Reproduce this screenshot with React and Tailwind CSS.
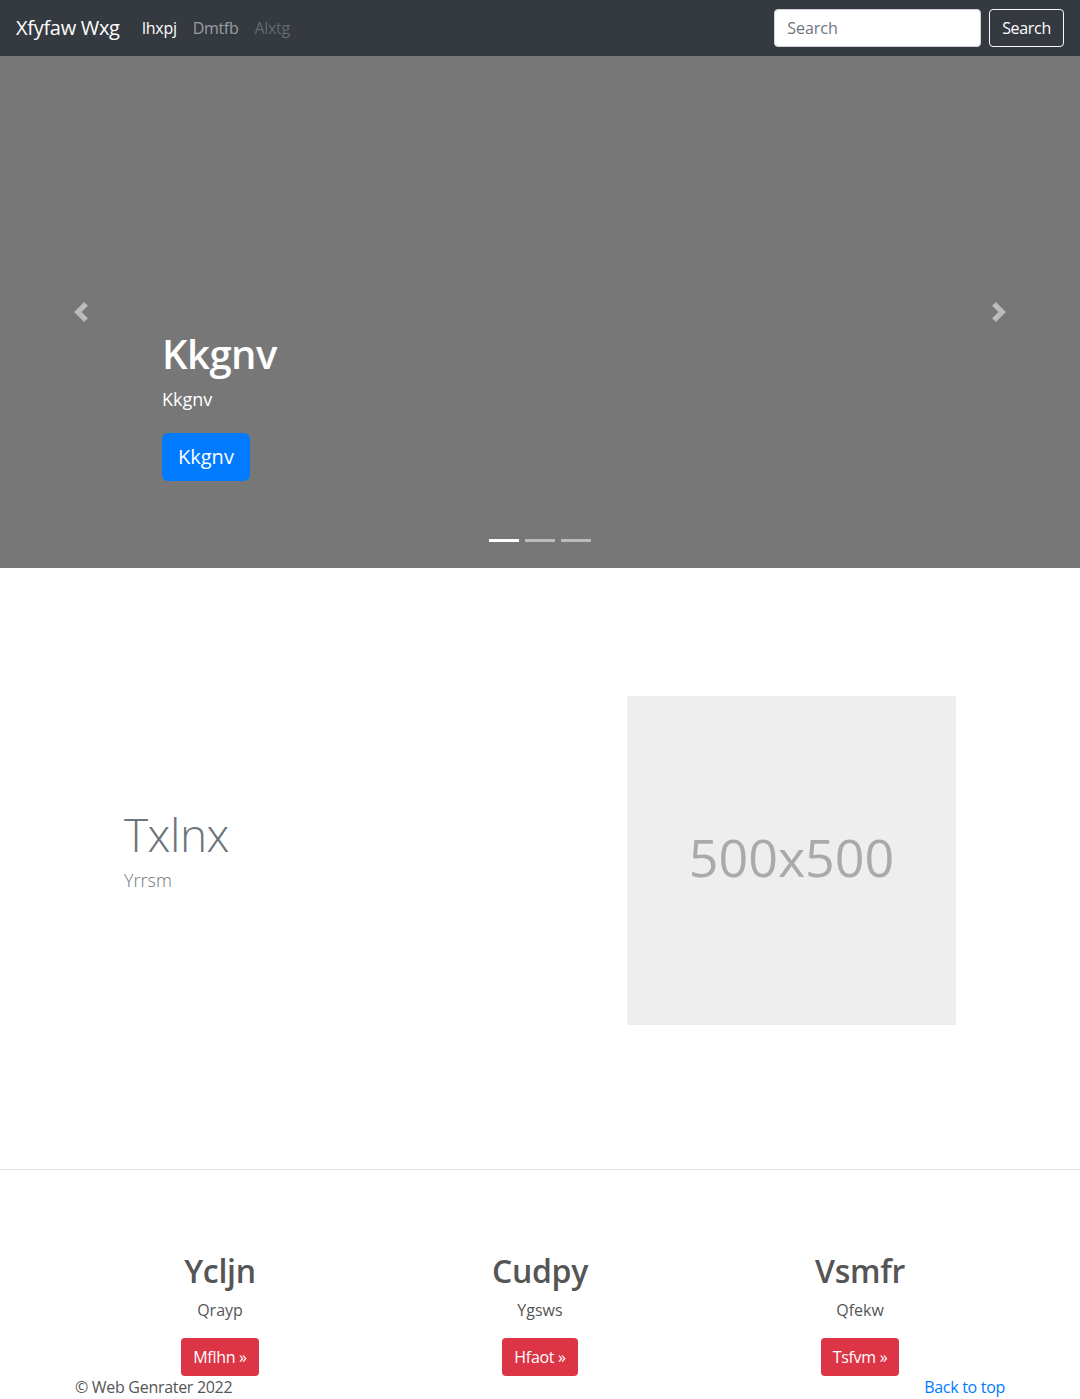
import React from "react";

const FONT = { fontFamily: '"Open Sans", "Noto Sans", "Liberation Sans", sans-serif' };

const CARDS = [
  { title: "Ycljn", text: "Qrayp", btn: "Mflhn" },
  { title: "Cudpy", text: "Ygsws", btn: "Hfaot" },
  { title: "Vsmfr", text: "Qfekw", btn: "Tsfvm" },
];

const Chevron = ({ dir }) => (
  <svg width="20" height="20" viewBox="0 0 8 8" className="opacity-50">
    {dir === "left" ? (
      <path d="M5.25 0l-4 4 4 4 1.5-1.5L4.25 4l2.5-2.5L5.25 0z" fill="#fff" />
    ) : (
      <path d="M2.75 0l-1.5 1.5L3.75 4l-2.5 2.5L2.75 8l4-4-4-4z" fill="#fff" />
    )}
  </svg>
);

const Navbar = () => (
  <nav className="h-14 bg-[#343a40] flex items-center px-4">
    <span className="text-white text-[20px] mr-[22px] tracking-[-0.3px]">Xfyfaw Wxg</span>
    <div className="flex items-center gap-4 text-[16px] tracking-[-0.3px]">
      <span className="text-white">Ihxpj</span>
      <span className="text-white/50">Dmtfb</span>
      <span className="text-white/25">Alxtg</span>
    </div>
    <div className="ml-auto flex items-center gap-2">
      <input
        placeholder="Search"
        className="w-[207px] h-[38px] bg-white rounded border border-[#ced4da] px-3 text-[16px] text-[#495057] placeholder:text-[#6c757d] outline-none"
      />
      <button className="h-[38px] px-3 rounded border border-[#f8f9fa] text-white text-[16px] tracking-[-0.3px]">
        Search
      </button>
    </div>
  </nav>
);

const Carousel = () => (
  <div className="relative h-[512px] bg-[#777]">
    <div className="absolute left-0 top-0 h-full w-[162px] flex items-center justify-center">
      <Chevron dir="left" />
    </div>
    <div className="absolute right-0 top-0 h-full w-[162px] flex items-center justify-center">
      <Chevron dir="right" />
    </div>
    <div className="flex flex-col items-start pl-[162px] pt-[274px] text-white">
      <h1 className="text-[40px] font-semibold leading-[1.2] mb-2 tracking-[-0.5px]">Kkgnv</h1>
      <p className="text-[18px] leading-[1.5] mb-5">Kkgnv</p>
      <button className="h-12 px-4 rounded-md bg-[#007bff] text-[20px] text-white">Kkgnv</button>
    </div>
    <div className="absolute bottom-[26px] left-0 right-0 flex justify-center gap-[6px]">
      <span className="w-[30px] h-[3px] bg-white" />
      <span className="w-[30px] h-[3px] bg-white/50" />
      <span className="w-[30px] h-[3px] bg-white/50" />
    </div>
  </div>
);

const Featurette = () => (
  <div className="pt-[128px] pb-[144px] border-b border-[#e5e5e5]">
    <div className="w-[960px] mx-auto flex">
      <div className="w-[567px] pl-[64px] flex flex-col justify-center">
        <h2 className="text-[46px] font-light leading-[1.2] text-[#6c757d] tracking-[-0.5px]">Txlnx</h2>
        <p className="text-[18px] font-light text-[#6c757d] mt-1 mb-5">Yrrsm</p>
      </div>
      <div className="w-[329px] h-[329px] bg-[#eee] flex items-center justify-center">
        <span className="text-[52px] text-[#aaa] -mt-2">500x500</span>
      </div>
    </div>
  </div>
);

const Cards = () => (
  <div className="w-[960px] mx-auto grid grid-cols-3 pt-[82px]">
    {CARDS.map((c) => (
      <div key={c.title} className="flex flex-col items-center">
        <h2 className="text-[32px] font-semibold leading-[1.2] text-[#555] mb-2 tracking-[-0.3px]">{c.title}</h2>
        <p className="text-[16px] leading-[1.5] text-[#555] mb-4">{c.text}</p>
        <button className="h-[38px] px-3 rounded bg-[#dc3545] text-white text-[16px] tracking-[-0.3px]">
          {c.btn} »
        </button>
      </div>
    ))}
  </div>
);

export default function App() {
  return (
    <div style={FONT} className="bg-white min-h-[1399px]">
      <Navbar />
      <Carousel />
      <Featurette />
      <Cards />
      <footer className="w-[960px] mx-auto px-[15px] flex justify-between text-[16px] leading-[1.5] text-[#555] tracking-[-0.3px] -mt-px">
        <span>© Web Genrater 2022</span>
        <span className="text-[#007bff]">Back to top</span>
      </footer>
    </div>
  );
}
